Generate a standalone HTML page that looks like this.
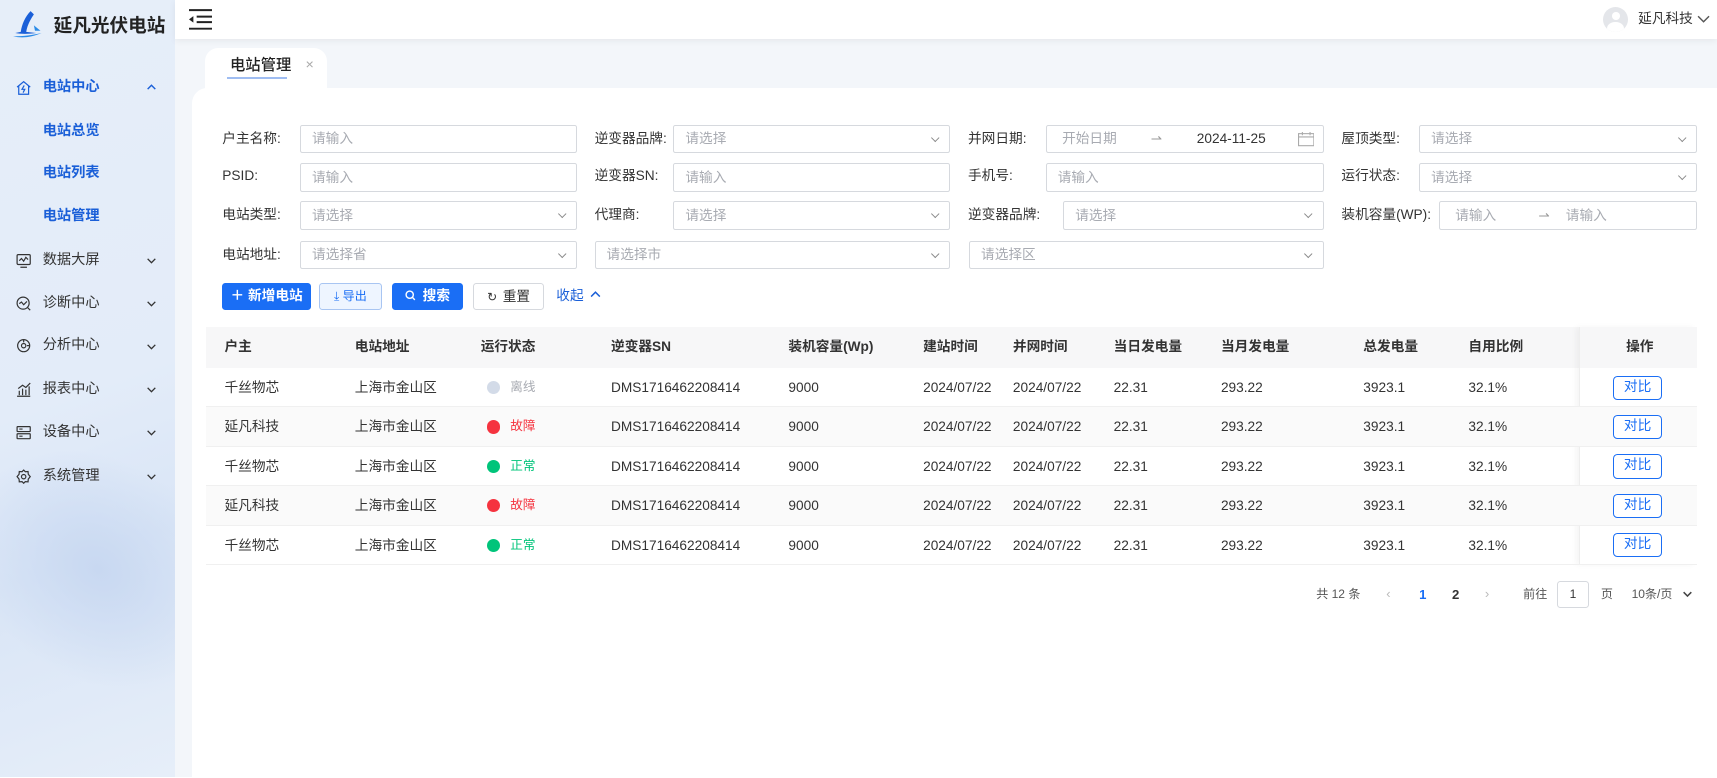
<!DOCTYPE html>
<html><head><meta charset="utf-8"><style>
*{box-sizing:border-box;margin:0;padding:0}
html,body{width:1717px;height:778px;overflow:hidden;background:#fff}
#w{zoom:1.09503;width:1568px;height:710px;position:relative;font-family:"Liberation Sans","Noto Sans CJK SC",sans-serif;color:#333;font-size:12.5px}
.a{position:absolute;white-space:nowrap}
#side{left:0;top:0;width:160px;height:710px;background:linear-gradient(160deg,#e6eef9 0%,#e3ecf9 50%,#d9e5f6 70%,#e6eef9 100%);overflow:hidden}
.blob{position:absolute;left:-40px;top:420px;width:260px;height:200px;border-radius:50%;background:radial-gradient(ellipse,#c8d8f1 0%,rgba(220,230,247,0) 70%);transform:rotate(35deg)}
.mi{position:absolute;left:39px;font-size:13px;color:#333;line-height:16px}
.ic{position:absolute;left:15px;width:14px;height:14px}
.chev{position:absolute;left:133px;width:10px;height:10px}
#hdr{left:160px;top:0;width:1408px;height:36px;background:#fff;box-shadow:0 2px 6px rgba(0,0,0,.06);z-index:2}
#cont{left:160px;top:36px;width:1408px;height:674px;background:#f3f6fa}
#panel{left:175px;top:80px;width:1393px;height:630px;background:#fff;border-top-left-radius:14px}
.lab{position:absolute;font-size:12.5px;color:#333;line-height:26px;height:26px}
.inp{position:absolute;height:26px;border:1px solid #d6d9de;border-radius:2px;background:#fff;color:#a8abb2;font-size:12.5px;line-height:16px;padding:4px 0 0 10px}
.sel::after{content:"";position:absolute;right:10px;top:8px;width:5px;height:5px;border-right:1px solid #888;border-bottom:1px solid #888;transform:rotate(45deg)}
.btn{position:absolute;top:258px;height:25px;border-radius:3px;font-size:12.5px;line-height:16px;padding-top:4px;text-align:center}
.th{position:absolute;top:299px;height:37px;line-height:37px;font-weight:bold;font-size:12.5px;color:#333}
.row{position:absolute;left:188px;width:1362px;height:36px;border-bottom:1px solid #f0f0f0}
.td{position:absolute;line-height:36px;font-size:12.5px;color:#333}
.dot{position:absolute;width:12px;height:12px;border-radius:50%;top:12px}
.cmp{position:absolute;left:1285px;top:7px;width:45px;height:22px;border:1px solid #1a6ef5;border-radius:4px;color:#1a6ef5;text-align:center;line-height:18px;font-size:12.5px;background:#fff}
</style></head><body><div id="w">

<div id="side" class="a"><div class="blob"></div>
<svg class="a" style="left:11px;top:9px" width="30" height="27" viewBox="0 0 30 27"><path d="M17 1 C12 6 9 13 8 20 L3 21 C8 22 15 22 22 21 L13 20 C14 13 18 7 20 4 Z" fill="#1a5fd8"/><path d="M1 24 C9 26 18 25 27 21 C19 23 10 24 1 24Z" fill="#2a8be8"/><path d="M20 14 L26 19 L21 19Z" fill="#2a8be8"/></svg>
<div class="a" style="left:49px;top:13px;font-size:17px;font-weight:bold;color:#222;line-height:22px">延凡光伏电站</div>

<svg class="ic" style="top:73px" viewBox="0 0 14 14" fill="none" stroke="#1a5fd8" stroke-width="1.1"><path d="M1 6.5 L7 1.5 L13 6.5 M2.5 5.5 V13 H11.5 V5.5"/><path d="M7.5 5 L5.5 8.5 H8 L6.5 11.5"/></svg>
<div class="mi" style="top:72px;color:#1a5fd8;font-weight:bold">电站中心</div>
<svg class="chev" style="top:75px" viewBox="0 0 10 10"><path d="M1.5 6.5 L5 3 L8.5 6.5" fill="none" stroke="#1a5fd8" stroke-width="1.3"/></svg>
<div class="mi" style="top:112px;color:#1a5fd8;font-weight:bold">电站总览</div>
<div class="mi" style="top:151px;color:#1a5fd8;font-weight:bold">电站列表</div>
<div class="mi" style="top:190px;color:#1a5fd8;font-weight:bold">电站管理</div>

<svg class="ic" style="top:231px" viewBox="0 0 14 14" fill="none" stroke="#333" stroke-width="1.1"><rect x="1" y="1.5" width="12" height="9" rx="1"/><path d="M3 7 L5 5 L7 7.5 L9 4 L11 6 M4 13 H10"/></svg>
<div class="mi" style="top:230px">数据大屏</div>
<svg class="ic" style="top:270px" viewBox="0 0 14 14" fill="none" stroke="#333" stroke-width="1.1"><circle cx="6.5" cy="6.5" r="5.5"/><path d="M3 7 L5 5.5 L7 8 L10 5 M10.5 10.5 L13 13"/></svg>
<div class="mi" style="top:269px">诊断中心</div>
<svg class="ic" style="top:309px" viewBox="0 0 14 14" fill="none" stroke="#333" stroke-width="1.1"><circle cx="7" cy="7" r="5.5"/><circle cx="7" cy="7" r="2"/><path d="M7 1.5 V4 M12.5 7 H10"/></svg>
<div class="mi" style="top:308px">分析中心</div>
<svg class="ic" style="top:349px" viewBox="0 0 14 14" fill="none" stroke="#333" stroke-width="1.1"><path d="M1 13 H13 M3 12 V8 M6 12 V6 M9 12 V7 M12 12 V4 M2 6 L6 3 L9 5 L13 1"/></svg>
<div class="mi" style="top:348px">报表中心</div>
<svg class="ic" style="top:388px" viewBox="0 0 14 14" fill="none" stroke="#333" stroke-width="1.1"><rect x="1" y="1.5" width="12" height="4.5" rx=".5"/><rect x="1" y="8" width="12" height="4.5" rx=".5"/><path d="M3 3.7 H6 M3 10.2 H6"/></svg>
<div class="mi" style="top:387px">设备中心</div>
<svg class="ic" style="top:428px" viewBox="0 0 14 14" fill="none" stroke="#333" stroke-width="1.1"><circle cx="7" cy="7" r="2"/><path d="M7 1 L8.5 2.5 L11 2.3 L11.2 4.8 L13 7 L11.2 9.2 L11 11.7 L8.5 11.5 L7 13 L5.5 11.5 L3 11.7 L2.8 9.2 L1 7 L2.8 4.8 L3 2.3 L5.5 2.5Z"/></svg>
<div class="mi" style="top:427px">系统管理</div>
<svg class="chev" style="top:233px" viewBox="0 0 10 10"><path d="M1.5 3.5 L5 7 L8.5 3.5" fill="none" stroke="#333" stroke-width="1.2"/></svg>
<svg class="chev" style="top:272px" viewBox="0 0 10 10"><path d="M1.5 3.5 L5 7 L8.5 3.5" fill="none" stroke="#333" stroke-width="1.2"/></svg>
<svg class="chev" style="top:311px" viewBox="0 0 10 10"><path d="M1.5 3.5 L5 7 L8.5 3.5" fill="none" stroke="#333" stroke-width="1.2"/></svg>
<svg class="chev" style="top:351px" viewBox="0 0 10 10"><path d="M1.5 3.5 L5 7 L8.5 3.5" fill="none" stroke="#333" stroke-width="1.2"/></svg>
<svg class="chev" style="top:390px" viewBox="0 0 10 10"><path d="M1.5 3.5 L5 7 L8.5 3.5" fill="none" stroke="#333" stroke-width="1.2"/></svg>
<svg class="chev" style="top:430px" viewBox="0 0 10 10"><path d="M1.5 3.5 L5 7 L8.5 3.5" fill="none" stroke="#333" stroke-width="1.2"/></svg>
</div>

<div id="hdr" class="a">
<svg class="a" style="left:13px;top:8px" width="21" height="19" viewBox="0 0 21 19"><path d="M0 1 H21 M7 7 H21 M7 12 H21 M0 18 H21" stroke="#222" stroke-width="1.8"/><path d="M0 9.5 L4 6.5 V12.5Z" fill="#222"/></svg>
<div class="a" style="left:1304px;top:6px;width:23px;height:23px;border-radius:50%;background:#e4e6ea;overflow:hidden"><div style="position:absolute;left:8px;top:5px;width:7px;height:7px;border-radius:50%;background:#fff"></div><div style="position:absolute;left:4px;top:14px;width:15px;height:12px;border-radius:50%;background:#fff"></div></div>
<div class="a" style="left:1336px;top:9px;font-size:12.5px;color:#333;line-height:16px">延凡科技</div>
<svg class="a" style="left:1390px;top:12px" width="12" height="10" viewBox="0 0 12 10"><path d="M1 3 L6 8 L11 3" fill="none" stroke="#555" stroke-width="1.3"/></svg>
</div>

<div id="cont" class="a"></div>
<div class="a" style="left:187px;top:44px;width:112px;height:40px;background:#fff;border-radius:12px 12px 0 0"></div>
<div class="a" style="left:210px;top:51px;font-size:14px;color:#222;font-weight:500;line-height:18px">电站管理</div>
<div class="a" style="left:207px;top:70px;width:55px;height:2px;background:#9fbdf2"></div>
<div class="a" style="left:279px;top:51px;font-size:13px;color:#aaa;line-height:18px">×</div>
<div id="panel" class="a"></div>

<!-- form -->
<div class="lab" style="left:203px;top:114px">户主名称:</div><div class="inp" style="left:274px;top:114px;width:253px">请输入</div>
<div class="lab" style="left:543px;top:114px">逆变器品牌:</div><div class="inp sel" style="left:615px;top:114px;width:253px">请选择</div>
<div class="lab" style="left:884px;top:114px">并网日期:</div>
<div class="inp" style="left:955px;top:114px;width:254px;padding-left:14px">开始日期<span style="position:absolute;left:95px;color:#999">⇀</span><span style="position:absolute;left:137px;color:#333">2024-11-25</span>
<svg style="position:absolute;right:8px;top:6px" width="15" height="13" viewBox="0 0 15 13"><rect x=".5" y="1.5" width="14" height="11" fill="none" stroke="#aaa"/><path d="M.5 4.5 H14.5 M4 0 V3 M11 0 V3" stroke="#aaa"/></svg></div>
<div class="lab" style="left:1225px;top:114px">屋顶类型:</div><div class="inp sel" style="left:1296px;top:114px;width:254px">请选择</div>

<div class="lab" style="left:203px;top:148px">PSID:</div><div class="inp" style="left:274px;top:149px;width:253px">请输入</div>
<div class="lab" style="left:543px;top:148px">逆变器SN:</div><div class="inp" style="left:615px;top:149px;width:253px">请输入</div>
<div class="lab" style="left:884px;top:148px">手机号:</div><div class="inp" style="left:955px;top:149px;width:254px">请输入</div>
<div class="lab" style="left:1225px;top:148px">运行状态:</div><div class="inp sel" style="left:1296px;top:149px;width:254px">请选择</div>

<div class="lab" style="left:203px;top:184px">电站类型:</div><div class="inp sel" style="left:274px;top:184px;width:253px">请选择</div>
<div class="lab" style="left:543px;top:184px">代理商:</div><div class="inp sel" style="left:615px;top:184px;width:253px">请选择</div>
<div class="lab" style="left:884px;top:184px">逆变器品牌:</div><div class="inp sel" style="left:971px;top:184px;width:238px">请选择</div>
<div class="lab" style="left:1225px;top:184px">装机容量(WP):</div><div class="inp" style="left:1314px;top:184px;width:236px;padding-left:14px">请输入<span style="position:absolute;left:90px;color:#999">⇀</span><span style="position:absolute;left:115px">请输入</span></div>

<div class="lab" style="left:203px;top:220px">电站地址:</div><div class="inp sel" style="left:274px;top:220px;width:253px">请选择省</div>
<div class="inp sel" style="left:543px;top:220px;width:325px">请选择市</div>
<div class="inp sel" style="left:885px;top:220px;width:324px">请选择区</div>

<div class="btn" style="left:203px;width:81px;background:#1a6ef5;color:#fff;font-weight:bold">＋ 新增电站</div>
<div class="btn" style="left:291px;width:58px;background:#eef5ff;border:1px solid #a8c5f2;color:#1a6ef5;font-size:11px">⤓ 导出</div>
<div class="btn" style="left:358px;width:65px;background:#1a6ef5;color:#fff;font-weight:bold"><svg width="10" height="10" viewBox="0 0 10 10" style="vertical-align:-1px;margin-right:6px"><circle cx="4.3" cy="4.3" r="3.3" fill="none" stroke="#fff" stroke-width="1.3"/><path d="M7 7 L9 9" stroke="#fff" stroke-width="1.3"/></svg>搜索</div>
<div class="btn" style="left:432px;width:65px;background:#fff;border:1px solid #d6d9de;color:#333"><span style="font-size:11px;margin-right:5px">↻</span>重置</div>
<div class="a" style="left:508px;top:262px;color:#1a5fd8;font-size:12.5px;line-height:16px">收起</div>
<svg class="a" style="left:539px;top:265px" width="10" height="8" viewBox="0 0 10 8"><path d="M1 6 L5 2 L9 6" fill="none" stroke="#1a5fd8" stroke-width="1.3"/></svg>

<!-- table -->
<div class="a" style="left:188px;top:299px;width:1362px;height:37px;background:#f7f7f8"></div>
<div class="a" style="left:1442px;top:299px;width:108px;height:217px;box-shadow:-3px 0 5px rgba(0,0,0,.04);border-left:1px solid #eee"></div>
<div class="th" style="left:205px">户主</div><div class="th" style="left:324px">电站地址</div><div class="th" style="left:439px">运行状态</div><div class="th" style="left:558px">逆变器SN</div><div class="th" style="left:720px">装机容量(Wp)</div><div class="th" style="left:843px">建站时间</div><div class="th" style="left:925px">并网时间</div><div class="th" style="left:1017px">当日发电量</div><div class="th" style="left:1115px">当月发电量</div><div class="th" style="left:1245px">总发电量</div><div class="th" style="left:1341px">自用比例</div><div class="th" style="left:1485px">操作</div>

<div class="row" style="top:336px"><div class="td" style="left:17px">千丝物芯</div><div class="td" style="left:136px">上海市金山区</div><div class="dot" style="left:257px;background:#d3dbe8"></div><div class="td" style="left:278px;color:#a8abb2;font-size:11.5px">离线</div><div class="td" style="left:370px">DMS1716462208414</div><div class="td" style="left:532px">9000</div><div class="td" style="left:655px">2024/07/22</div><div class="td" style="left:737px">2024/07/22</div><div class="td" style="left:829px">22.31</div><div class="td" style="left:927px">293.22</div><div class="td" style="left:1057px">3923.1</div><div class="td" style="left:1153px">32.1%</div><div class="cmp">对比</div></div>
<div class="row" style="top:372px;background:#fafafa"><div class="td" style="left:17px">延凡科技</div><div class="td" style="left:136px">上海市金山区</div><div class="dot" style="left:257px;background:#f5333f"></div><div class="td" style="left:278px;color:#f5333f;font-size:11.5px">故障</div><div class="td" style="left:370px">DMS1716462208414</div><div class="td" style="left:532px">9000</div><div class="td" style="left:655px">2024/07/22</div><div class="td" style="left:737px">2024/07/22</div><div class="td" style="left:829px">22.31</div><div class="td" style="left:927px">293.22</div><div class="td" style="left:1057px">3923.1</div><div class="td" style="left:1153px">32.1%</div><div class="cmp">对比</div></div>
<div class="row" style="top:408px"><div class="td" style="left:17px">千丝物芯</div><div class="td" style="left:136px">上海市金山区</div><div class="dot" style="left:257px;background:#00c47a"></div><div class="td" style="left:278px;color:#00c47a;font-size:11.5px">正常</div><div class="td" style="left:370px">DMS1716462208414</div><div class="td" style="left:532px">9000</div><div class="td" style="left:655px">2024/07/22</div><div class="td" style="left:737px">2024/07/22</div><div class="td" style="left:829px">22.31</div><div class="td" style="left:927px">293.22</div><div class="td" style="left:1057px">3923.1</div><div class="td" style="left:1153px">32.1%</div><div class="cmp">对比</div></div>
<div class="row" style="top:444px;background:#fafafa"><div class="td" style="left:17px">延凡科技</div><div class="td" style="left:136px">上海市金山区</div><div class="dot" style="left:257px;background:#f5333f"></div><div class="td" style="left:278px;color:#f5333f;font-size:11.5px">故障</div><div class="td" style="left:370px">DMS1716462208414</div><div class="td" style="left:532px">9000</div><div class="td" style="left:655px">2024/07/22</div><div class="td" style="left:737px">2024/07/22</div><div class="td" style="left:829px">22.31</div><div class="td" style="left:927px">293.22</div><div class="td" style="left:1057px">3923.1</div><div class="td" style="left:1153px">32.1%</div><div class="cmp">对比</div></div>
<div class="row" style="top:480px"><div class="td" style="left:17px">千丝物芯</div><div class="td" style="left:136px">上海市金山区</div><div class="dot" style="left:257px;background:#00c47a"></div><div class="td" style="left:278px;color:#00c47a;font-size:11.5px">正常</div><div class="td" style="left:370px">DMS1716462208414</div><div class="td" style="left:532px">9000</div><div class="td" style="left:655px">2024/07/22</div><div class="td" style="left:737px">2024/07/22</div><div class="td" style="left:829px">22.31</div><div class="td" style="left:927px">293.22</div><div class="td" style="left:1057px">3923.1</div><div class="td" style="left:1153px">32.1%</div><div class="cmp">对比</div></div>

<!-- pagination -->
<div class="a" style="left:1202px;top:536px;font-size:11px;color:#555;line-height:14px">共 12 条</div>
<div class="a" style="left:1266px;top:535px;font-size:12px;color:#bbb;line-height:14px">‹</div>
<div class="a" style="left:1296px;top:536px;font-size:12px;color:#1a6ef5;font-weight:bold;line-height:14px">1</div>
<div class="a" style="left:1326px;top:536px;font-size:12px;color:#333;font-weight:bold;line-height:14px">2</div>
<div class="a" style="left:1356px;top:535px;font-size:12px;color:#bbb;line-height:14px">›</div>
<div class="a" style="left:1391px;top:536px;font-size:11px;color:#555;line-height:14px">前往</div>
<div class="a" style="left:1422px;top:531px;width:29px;height:24px;border:1px solid #d6d9de;border-radius:3px;text-align:center;line-height:22px;font-size:11px">1</div>
<div class="a" style="left:1462px;top:536px;font-size:11px;color:#555;line-height:14px">页</div>
<div class="a" style="left:1490px;top:536px;font-size:11px;color:#555;line-height:14px">10条/页</div>
<svg class="a" style="left:1536px;top:539px" width="10" height="8" viewBox="0 0 10 8"><path d="M1.5 2 L5 5.5 L8.5 2" fill="none" stroke="#444" stroke-width="1.4"/></svg>

</div></body></html>
